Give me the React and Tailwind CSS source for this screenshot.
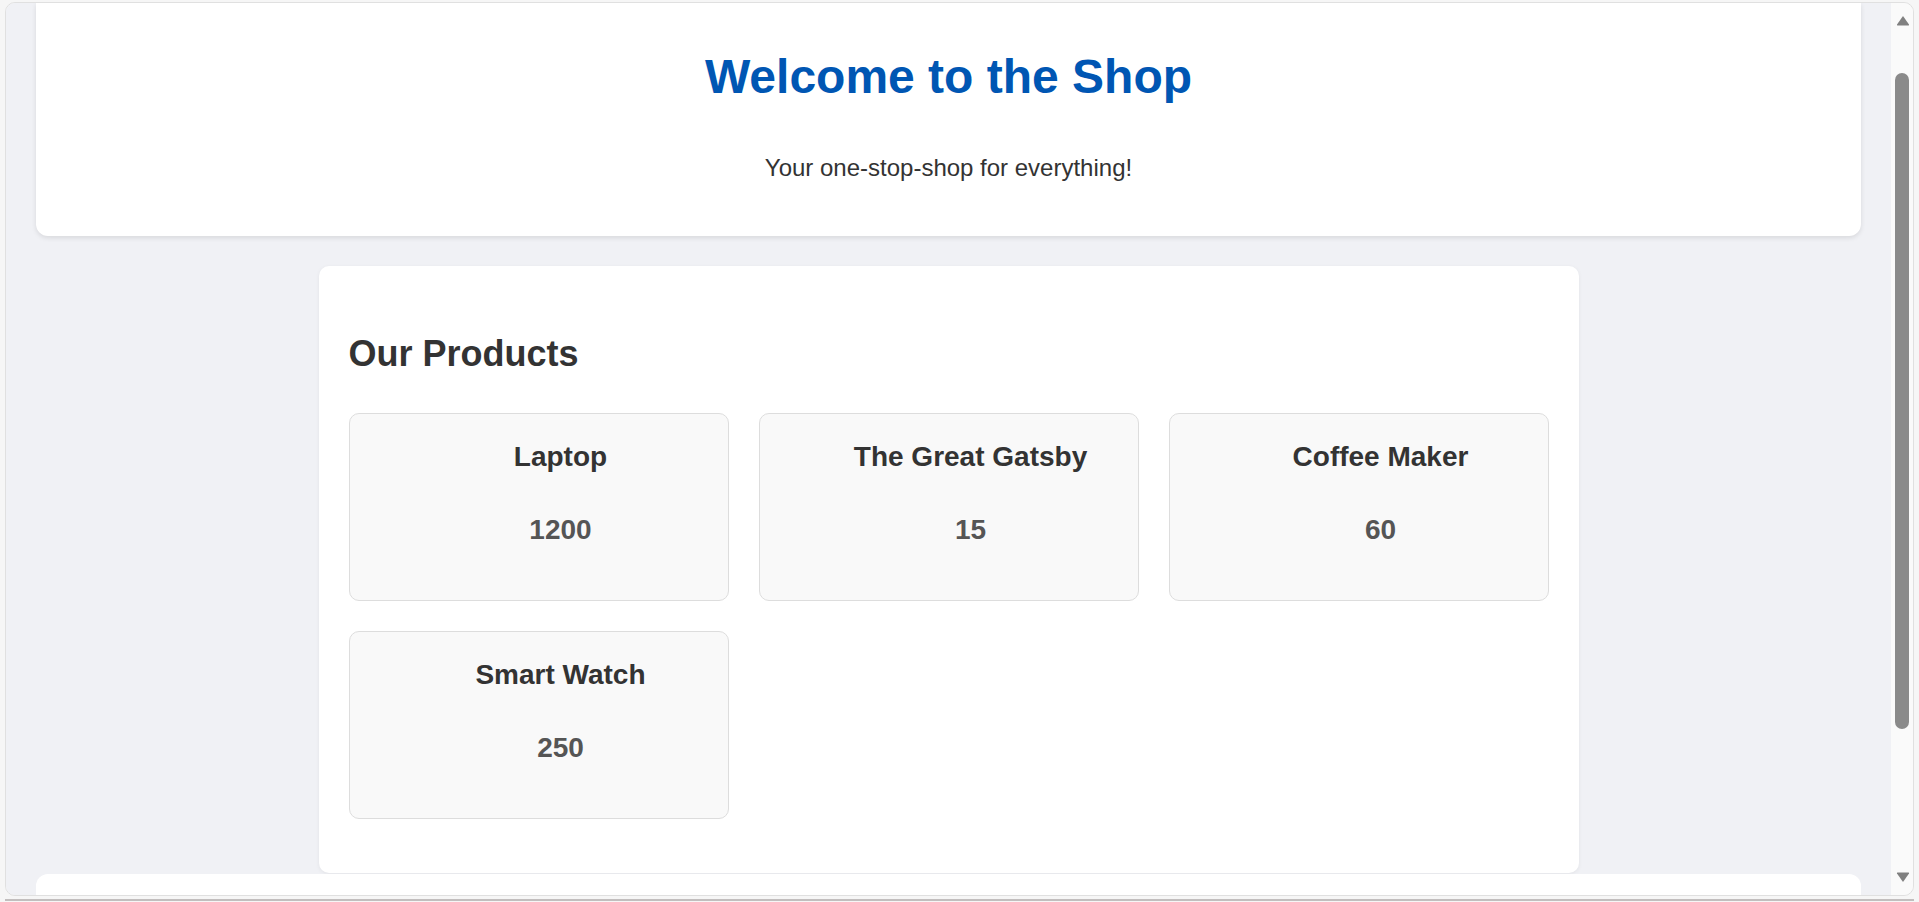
import React from "react";

const products = [
  { name: "Laptop", price: 1200 },
  { name: "The Great Gatsby", price: 15 },
  { name: "Coffee Maker", price: 60 },
  { name: "Smart Watch", price: 250 },
];

function ProductCard({ name, price }) {
  return (
    <div className="h-[188px] rounded-[10px] border border-[#dddddd] bg-[#f9f9f9] pl-[44px] pt-[27px] text-center">
      <div className="text-[28px] font-bold leading-[32px] text-[#333333]">{name}</div>
      <div className="mt-[41px] text-[28px] font-bold leading-[32px] text-[#555555]">{price}</div>
    </div>
  );
}

export default function App() {
  return (
    <div
      className="h-[902px] w-[1919px] overflow-hidden bg-[#f6f6f6]"
      style={{ fontFamily: '"Liberation Sans", Arial, sans-serif' }}
    >
      <div className="px-[5px] pt-[2px]">
        <div className="flex h-[894px] overflow-hidden rounded-[10px] border border-[#e0e0e0]">
          <div className="flex-1 overflow-hidden bg-[#f0f1f5]">
            <div className="mx-[30px] h-[233px] rounded-b-[12px] bg-white pt-[46px] text-center shadow-[0_2px_5px_rgba(0,0,0,0.1)]">
              <h1 className="text-[48px] font-bold leading-[55px] text-[#0056b3]">Welcome to the Shop</h1>
              <p className="mt-[50px] text-[24px] leading-[28px] text-[#333333]">Your one-stop-shop for everything!</p>
            </div>
            <div className="mx-auto mt-[30px] h-[607px] w-[1260px] rounded-[10px] bg-white px-[30px] pt-[67px] shadow-[0_1px_4px_rgba(0,0,0,0.06)]">
              <h2 className="text-[36px] font-bold leading-[41px] text-[#333333]">Our Products</h2>
              <div className="mt-[39px] grid grid-cols-3 gap-[30px]">
                {products.map((p) => (
                  <ProductCard key={p.name} name={p.name} price={p.price} />
                ))}
              </div>
            </div>
            <div className="mx-[30px] mt-[1px] h-[40px] rounded-t-[12px] bg-white"></div>
          </div>
          <div className="flex w-[22px] flex-col items-center bg-[#fafafa]">
            <svg className="mt-[12px] ml-[2px]" width="14" height="11" viewBox="0 0 14 11">
              <path d="M7 1 L13 9.5 Q13.5 10.5 12.3 10.5 L1.7 10.5 Q0.5 10.5 1 9.5 Z" fill="#808080" />
            </svg>
            <div className="mt-[47px] h-[656px] w-[14px] rounded-full bg-[#8a8a8a]"></div>
            <svg className="mt-[143px] ml-[2px]" width="14" height="11" viewBox="0 0 14 11">
              <path d="M7 10 L13 1.5 Q13.5 0.5 12.3 0.5 L1.7 0.5 Q0.5 0.5 1 1.5 Z" fill="#808080" />
            </svg>
          </div>
        </div>
        <div className="mt-[3px] h-[2px] bg-[#c2bebe]"></div>
      </div>
    </div>
  );
}
